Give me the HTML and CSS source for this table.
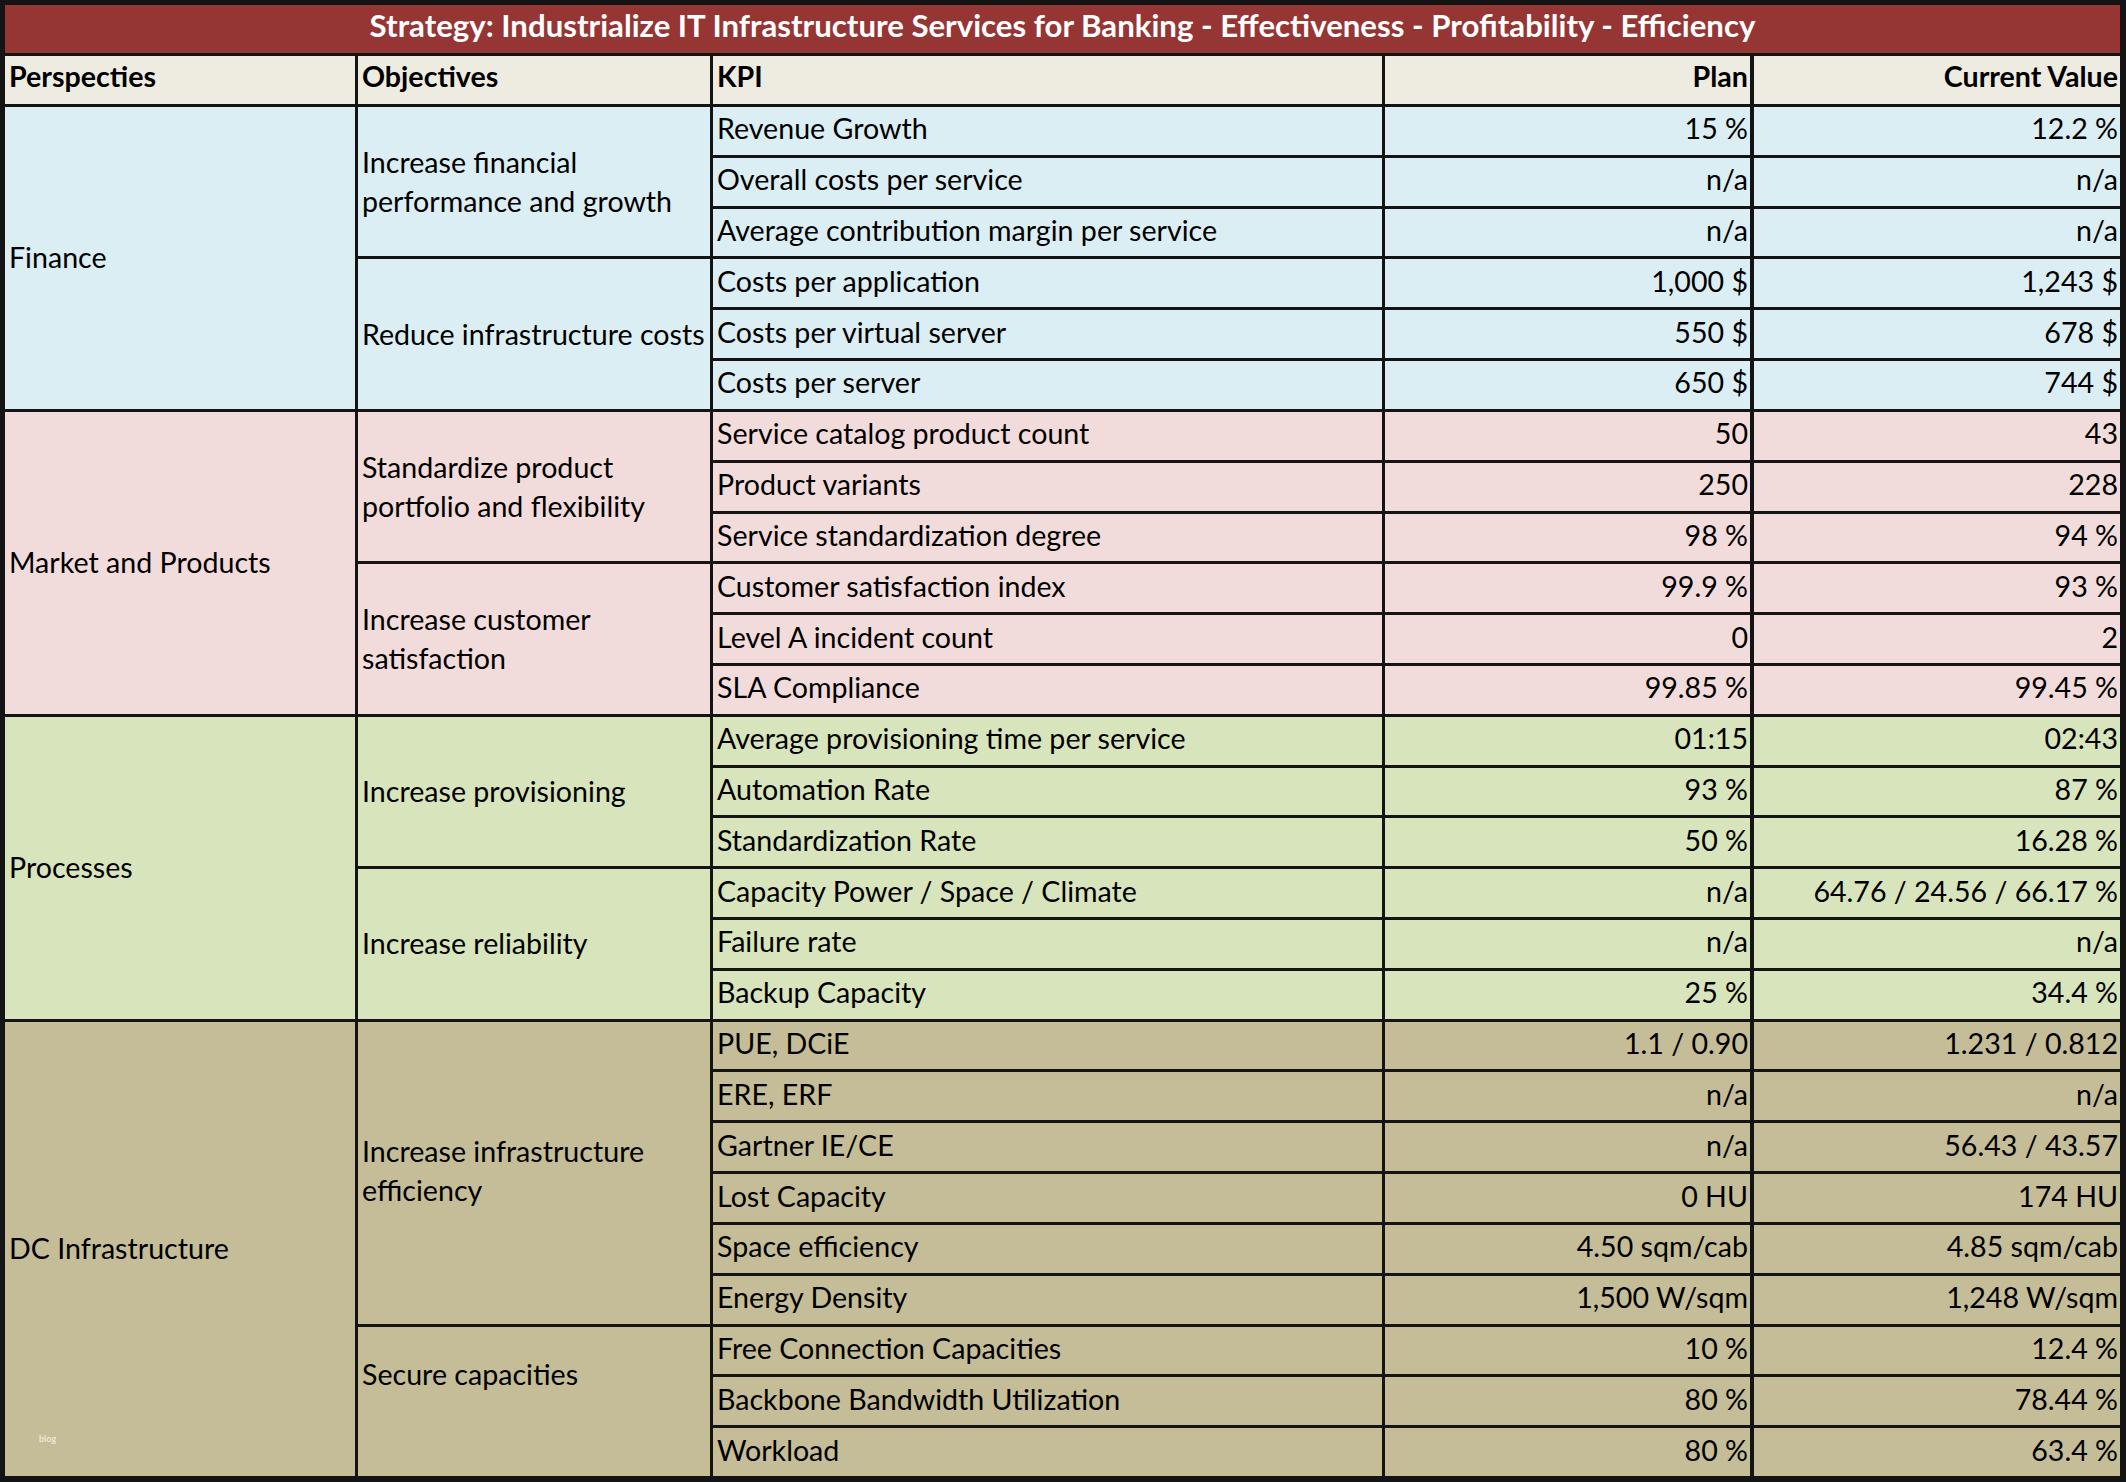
FILE: index.html
```html
<!DOCTYPE html>
<html lang="en">
<head>
<meta charset="utf-8">
<title>Strategy KPI Table</title>
<link rel="stylesheet" href="styles.css">
</head>
<body>
<div class="sheet">
  <div class="title">Strategy: Industrialize IT Infrastructure Services for Banking - Effectiveness - Profitability - Efficiency</div>

  <div class="c persp head">Perspecties</div>
  <div class="c obj head">Objectives</div>
  <div class="c kpi head">KPI</div>
  <div class="c plan head num">Plan</div>
  <div class="c cur head num">Current Value</div>

  <!-- Finance -->
  <div class="c persp fin span6">Finance</div>
  <div class="c obj fin span3">Increase financial<br>performance and growth</div>
  <div class="c kpi fin">Revenue Growth</div><div class="c plan fin num">15 %</div><div class="c cur fin num">12.2 %</div>
  <div class="c kpi fin">Overall costs per service</div><div class="c plan fin num">n/a</div><div class="c cur fin num">n/a</div>
  <div class="c kpi fin">Average contribution margin per service</div><div class="c plan fin num">n/a</div><div class="c cur fin num">n/a</div>
  <div class="c obj fin span3">Reduce infrastructure costs</div>
  <div class="c kpi fin">Costs per application</div><div class="c plan fin num">1,000 $</div><div class="c cur fin num">1,243 $</div>
  <div class="c kpi fin">Costs per virtual server</div><div class="c plan fin num">550 $</div><div class="c cur fin num">678 $</div>
  <div class="c kpi fin">Costs per server</div><div class="c plan fin num">650 $</div><div class="c cur fin num">744 $</div>

  <!-- Market and Products -->
  <div class="c persp mkt span6">Market and Products</div>
  <div class="c obj mkt span3">Standardize product<br>portfolio and flexibility</div>
  <div class="c kpi mkt">Service catalog product count</div><div class="c plan mkt num">50</div><div class="c cur mkt num">43</div>
  <div class="c kpi mkt">Product variants</div><div class="c plan mkt num">250</div><div class="c cur mkt num">228</div>
  <div class="c kpi mkt">Service standardization degree</div><div class="c plan mkt num">98 %</div><div class="c cur mkt num">94 %</div>
  <div class="c obj mkt span3">Increase customer<br>satisfaction</div>
  <div class="c kpi mkt">Customer satisfaction index</div><div class="c plan mkt num">99.9 %</div><div class="c cur mkt num">93 %</div>
  <div class="c kpi mkt">Level A incident count</div><div class="c plan mkt num">0</div><div class="c cur mkt num">2</div>
  <div class="c kpi mkt">SLA Compliance</div><div class="c plan mkt num">99.85 %</div><div class="c cur mkt num">99.45 %</div>

  <!-- Processes -->
  <div class="c persp proc span6">Processes</div>
  <div class="c obj proc span3">Increase provisioning</div>
  <div class="c kpi proc">Average provisioning time per service</div><div class="c plan proc num">01:15</div><div class="c cur proc num">02:43</div>
  <div class="c kpi proc">Automation Rate</div><div class="c plan proc num">93 %</div><div class="c cur proc num">87 %</div>
  <div class="c kpi proc">Standardization Rate</div><div class="c plan proc num">50 %</div><div class="c cur proc num">16.28 %</div>
  <div class="c obj proc span3">Increase reliability</div>
  <div class="c kpi proc">Capacity Power / Space / Climate</div><div class="c plan proc num">n/a</div><div class="c cur proc num">64.76 / 24.56 / 66.17 %</div>
  <div class="c kpi proc">Failure rate</div><div class="c plan proc num">n/a</div><div class="c cur proc num">n/a</div>
  <div class="c kpi proc">Backup Capacity</div><div class="c plan proc num">25 %</div><div class="c cur proc num">34.4 %</div>

  <!-- DC Infrastructure -->
  <div class="c persp dc span9">DC Infrastructure<span class="mark">blog</span></div>
  <div class="c obj dc span6">Increase infrastructure<br>efficiency</div>
  <div class="c kpi dc">PUE, DCiE</div><div class="c plan dc num">1.1 / 0.90</div><div class="c cur dc num">1.231 / 0.812</div>
  <div class="c kpi dc">ERE, ERF</div><div class="c plan dc num">n/a</div><div class="c cur dc num">n/a</div>
  <div class="c kpi dc">Gartner IE/CE</div><div class="c plan dc num">n/a</div><div class="c cur dc num">56.43 / 43.57</div>
  <div class="c kpi dc">Lost Capacity</div><div class="c plan dc num">0 HU</div><div class="c cur dc num">174 HU</div>
  <div class="c kpi dc">Space efficiency</div><div class="c plan dc num">4.50 sqm/cab</div><div class="c cur dc num">4.85 sqm/cab</div>
  <div class="c kpi dc">Energy Density</div><div class="c plan dc num">1,500 W/sqm</div><div class="c cur dc num">1,248 W/sqm</div>
  <div class="c obj dc span3 secure">Secure capacities</div>
  <div class="c kpi dc">Free Connection Capacities</div><div class="c plan dc num">10 %</div><div class="c cur dc num">12.4 %</div>
  <div class="c kpi dc">Backbone Bandwidth Utilization</div><div class="c plan dc num">80 %</div><div class="c cur dc num">78.44 %</div>
  <div class="c kpi dc">Workload</div><div class="c plan dc num">80 %</div><div class="c cur dc num">63.4 %</div>
</div>
</body>
</html>
```
FILE: styles.css
```css
html, body {
  margin: 0;
  padding: 0;
  background: #ffffff;
}

.sheet {
  box-sizing: border-box;
  width: 2126px;
  height: 1482px;
  padding: 5px 6px 6px 5px;
  background: #141414;
  display: grid;
  grid-template-columns: 350px 352px 669px 365px 367px;
  grid-template-rows: 48px 48px repeat(27, 1fr);
  column-gap: 3px;
  row-gap: 3px;
  font-family: Lato, "Liberation Sans", sans-serif;
  font-size: 28.6px;
  color: #000;
}

.title {
  grid-column: 1 / -1;
  background: #963634;
  color: #ffffff;
  font-weight: 700;
  font-size: 31.2px;
  display: flex;
  align-items: center;
  justify-content: center;
  padding-bottom: 8px;
  white-space: nowrap;
}

.c {
  display: flex;
  align-items: center;
  padding: 0 4px 4px 4px;
  white-space: nowrap;
  line-height: 39px;
  overflow: hidden;
}

.persp { grid-column: 1; position: relative; }
.persp.span6, .persp.span9 { padding-bottom: 0; }
.obj { grid-column: 2; }
.obj.span3 { padding-bottom: 0; }
.obj.secure { padding-bottom: 54px; }
.kpi { grid-column: 3; }
.plan { grid-column: 4; }
.cur { grid-column: 5; border-left: 1px solid #141414; }

.num {
  justify-content: flex-end;
  padding-right: 2px;
}

.span3 { grid-row: span 3; }
.span6 { grid-row: span 6; }
.span9 { grid-row: span 9; }

.head {
  background: #eeece1;
  font-weight: 700;
  padding-bottom: 7px;
}

.fin { background: #daeef3; }
.mkt { background: #f2dcdb; }
.proc { background: #d8e4bc; }
.dc { background: #c4bd97; }

.mark {
  position: absolute;
  left: 34px;
  bottom: 32px;
  font-size: 9px;
  line-height: 10px;
  font-weight: 700;
  color: #ece8d8;
}
```
